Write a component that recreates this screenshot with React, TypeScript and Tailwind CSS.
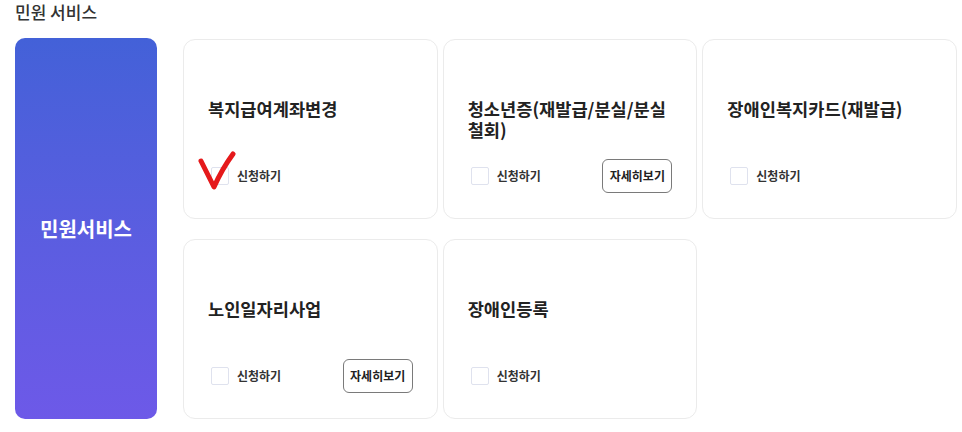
import React from "react";

type Service = {
  title: string;
  detail?: boolean;
  marked?: boolean;
};

const services: Service[] = [
  { title: "복지급여계좌변경", marked: true },
  { title: "청소년증(재발급/분실/분실 철회)", detail: true },
  { title: "장애인복지카드(재발급)" },
  { title: "노인일자리사업", detail: true },
  { title: "장애인등록" },
];

const ServiceCard: React.FC<{ item: Service }> = ({ item }) => {
  return (
    <div className="relative flex h-[180px] flex-col rounded-xl border border-[#ebebeb] bg-white px-[24px] pt-[58px] pb-[25px]">
      <h3 className="text-[17.6px] leading-[21px] font-bold text-[#222]">
        {item.title}
      </h3>
      <div className="mt-auto flex h-[34px] items-center justify-between">
        <label className="flex items-center">
          <span className="ml-[3px] h-[18px] w-[18px] rounded-[2px] border border-[#dfe2ee] bg-white" />
          <span className="ml-[8px] text-[12px] font-semibold text-[#333]">
            신청하기
          </span>
        </label>
        {item.detail && (
          <button className="h-[34px] w-[70px] rounded-md border border-[#7a7a7a] bg-white text-[12px] font-semibold text-[#222]">
            자세히보기
          </button>
        )}
      </div>

      {/* red hand-drawn check mark */}
      {item.marked && (
        <svg
          className="absolute left-[14px] top-[111px]"
          width="40"
          height="40"
          viewBox="0 0 40 40"
          fill="none"
        >
          <path
            d="M3 10 Q9 22 16 36 Q24 18 35 3"
            stroke="#e5191b"
            strokeWidth="5"
            strokeLinecap="round"
            strokeLinejoin="round"
          />
        </svg>
      )}
    </div>
  );
};

const App: React.FC = () => {
  return (
    <div
      className="w-[962px] bg-white pr-[5px] pl-[15px]"
      style={{ fontFamily: '"Noto Sans CJK KR", "Noto Sans", sans-serif' }}
    >
      <h2 className="text-[17px] leading-[23px] font-medium text-[#333]">
        민원 서비스
      </h2>

      <div className="mt-[15px] flex gap-[26px]">
        <div className="flex w-[142px] items-center justify-center rounded-[10px] bg-linear-to-b from-[#4361d8] to-[#6d59e8]">
          <span className="text-[20px] font-bold text-white">민원서비스</span>
        </div>

        <div className="grid flex-1 grid-cols-3 gap-x-[5px] gap-y-[20px] pt-[1px]">
          {services.map((s) => (
            <ServiceCard key={s.title} item={s} />
          ))}
        </div>
      </div>
    </div>
  );
};

export default App;
